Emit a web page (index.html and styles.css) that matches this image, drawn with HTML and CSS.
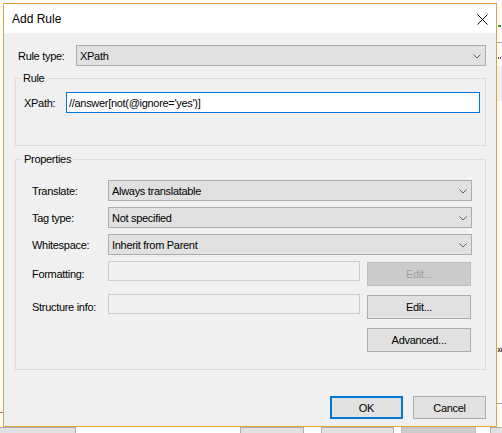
FILE: index.html
```html
<!DOCTYPE html>
<html>
<head>
<meta charset="utf-8">
<link rel="stylesheet" href="styles.css">
</head>
<body>
<div class="desktop">
  <div class="bg-line bg-line-top"></div>
  <div class="bg-gray"></div>
  <div class="bg-green"></div>
  <div class="bg-dots"></div>
  <div class="bg-line bg-line-low"></div>
  <div class="bg-chev">»</div>
  <div class="bg-left-line"></div>
  <div class="bg-btn bg-help">Help</div>
  <div class="bg-btn bg-back">Back</div>
  <div class="bg-btn bg-next">Next</div>
  <div class="bg-btn bg-finish">Finish</div>
  <div class="bg-btn bg-last"></div>
</div>

<div class="dialog">
  <div class="titlebar">
    <span class="title">Add Rule</span>
    <svg class="close" width="11" height="11" viewBox="0 0 11 11"><path d="M0.5 0.5 L10.5 10.5 M10.5 0.5 L0.5 10.5" stroke="#000" stroke-width="1"/></svg>
  </div>
  <div class="content">
    <div class="row ruletype">
      <span class="label lbl-ruletype">Rule type:</span>
      <div class="combo combo-wide"><span>XPath</span>
        <svg class="chev" width="8" height="5" viewBox="0 0 8 5"><polyline points="0.5,0.5 4,4 7.5,0.5" fill="none" stroke="#606060" stroke-width="1"/></svg>
      </div>
    </div>

    <div class="group group-rule">
      <span class="legend">Rule</span>
      <div class="row">
        <span class="label lbl-xpath">XPath:</span>
        <div class="textbox focused">//answer[not(@ignore='yes')]</div>
      </div>
    </div>

    <div class="group group-props">
      <span class="legend">Properties</span>
      <div class="row prop-row">
        <span class="label lbl-prop">Translate:</span>
        <div class="combo combo-prop"><span>Always translatable</span>
          <svg class="chev" width="8" height="5" viewBox="0 0 8 5"><polyline points="0.5,0.5 4,4 7.5,0.5" fill="none" stroke="#606060" stroke-width="1"/></svg>
        </div>
      </div>
      <div class="row prop-row">
        <span class="label lbl-prop">Tag type:</span>
        <div class="combo combo-prop"><span>Not specified</span>
          <svg class="chev" width="8" height="5" viewBox="0 0 8 5"><polyline points="0.5,0.5 4,4 7.5,0.5" fill="none" stroke="#606060" stroke-width="1"/></svg>
        </div>
      </div>
      <div class="row prop-row">
        <span class="label lbl-prop">Whitespace:</span>
        <div class="combo combo-prop"><span>Inherit from Parent</span>
          <svg class="chev" width="8" height="5" viewBox="0 0 8 5"><polyline points="0.5,0.5 4,4 7.5,0.5" fill="none" stroke="#606060" stroke-width="1"/></svg>
        </div>
      </div>
      <div class="row edit-row">
        <span class="label lbl-prop">Formatting:</span>
        <div class="textbox disabled-box"></div>
        <div class="btn btn-edit disabled">Edit...</div>
      </div>
      <div class="row edit-row">
        <span class="label lbl-prop">Structure info:</span>
        <div class="textbox disabled-box"></div>
        <div class="btn btn-edit">Edit...</div>
      </div>
      <div class="row adv-row">
        <div class="btn btn-edit">Advanced...</div>
      </div>
    </div>

    <div class="buttons">
      <div class="btn btn-dlg btn-ok">OK</div>
      <div class="btn btn-dlg">Cancel</div>
    </div>
  </div>
</div>
</body>
</html>
```

FILE: styles.css
```css
html, body {
  margin: 0;
  padding: 0;
  background: #ffffff;
  width: 502px;
  height: 433px;
  overflow: hidden;
  font-family: "Liberation Sans", Arial, sans-serif;
  font-size: 11px;
  letter-spacing: -0.3px;
  color: #000;
}

/* ---------- desktop behind the dialog ---------- */
.desktop {
  position: absolute;
  left: 0;
  top: 0;
  width: 502px;
  height: 433px;
  overflow: hidden;
}
.bg-line {
  position: absolute;
  left: 497px;
  width: 5px;
  height: 1px;
  background: #a0a0a0;
}
.bg-line-top { top: 42px; }
.bg-line-low { top: 403px; }
.bg-gray {
  position: absolute;
  left: 497px;
  top: 66px;
  width: 5px;
  height: 35px;
  background: #f0f0f0;
}
.bg-green {
  position: absolute;
  left: 498px;
  top: 25px;
  width: 3px;
  height: 2px;
  background: #2e9b2e;
}
.bg-dots {
  position: absolute;
  left: 498px;
  top: 57px;
  width: 4px;
  height: 2px;
  background: repeating-linear-gradient(90deg, #6b2a7a 0 1px, transparent 1px 2px);
}
.bg-chev {
  position: absolute;
  left: 497px;
  top: 343px;
  font-size: 11px;
  color: #404040;
  font-weight: bold;
}
.bg-left-line {
  position: absolute;
  left: 0;
  top: 412px;
  width: 3px;
  height: 1px;
  background: #808080;
}
.bg-btn {
  position: absolute;
  top: 427px;
  height: 24px;
  box-sizing: border-box;
  background: #e1e1e1;
  border: 1px solid #adadad;
  text-align: center;
  padding-top: 4px;
  font-size: 11px;
}
.bg-help { left: -1px; width: 77px; }
.bg-back { left: 240px; width: 64px; padding-left: 22px; }
.bg-next { left: 321px; width: 73px; }
.bg-finish { left: 401px; width: 75px; background: #cccccc; border-color: #bfbfbf; color: #a0a0a0; }
.bg-last { left: 490px; width: 20px; }

/* ---------- dialog ---------- */
.dialog {
  position: absolute;
  left: 3px;
  top: 3px;
  width: 494px;
  height: 424px;
  box-sizing: border-box;
  border: 1px solid #e7a13c;
  background: #f0f0f0;
  display: flex;
  flex-direction: column;
}
.titlebar {
  height: 29px;
  background: #ffffff;
  display: flex;
  align-items: center;
  justify-content: space-between;
  padding: 0 8px 0 8px;
  flex-shrink: 0;
}
.title {
  font-size: 12px;
  letter-spacing: 0;
  padding-top: 1px;
}
.close {
  display: block;
  margin-top: 1px;
}
.content {
  padding: 12px 10px 0 11px;
  display: flex;
  flex-direction: column;
}

.row {
  display: flex;
  align-items: center;
}
.label {
  flex-shrink: 0;
  white-space: nowrap;
}
.ruletype { padding-left: 3px; height: 21px; }
.lbl-ruletype { width: 58px; }
.lbl-xpath { width: 42px; }
.lbl-prop { width: 76px; }

.combo {
  box-sizing: border-box;
  height: 21px;
  background: #e1e1e1;
  border: 1px solid #adadad;
  display: flex;
  align-items: center;
  padding: 0 4px 0 3px;
  white-space: nowrap;
}
.combo .chev {
  margin-left: auto;
  display: block;
  margin-top: 1px;
}
.combo-wide { flex: 1; }
.combo-prop { width: 364px; }

.group {
  border: 1px solid #dcdcdc;
  display: flex;
  flex-direction: column;
  padding: 0;
}
.legend {
  align-self: flex-start;
  display: block;
  height: 13px;
  line-height: 13px;
  margin: -7px 0 0 5px;
  padding: 0 2px;
  background: #f0f0f0;
}
.group-rule {
  margin-top: 12px;
  padding-bottom: 32px;
}
.group-rule .legend { margin-bottom: 7px; }
.group-rule .row { padding: 0 5px 0 8px; }

.group-props {
  margin-top: 13px;
  padding-bottom: 17px;
}
.group-props .legend { margin-bottom: 14px; margin-left: 6px; }
.group-props .row { padding-left: 16px; }

.textbox {
  box-sizing: border-box;
  height: 21px;
  background: #ffffff;
  border: 1px solid #7a7a7a;
  padding: 0 2px;
  display: flex;
  align-items: center;
  white-space: nowrap;
}
.focused {
  flex: 1;
  border-color: #0078d7;
}

.prop-row { margin-bottom: 6px; }
.edit-row {
  height: 25px;
}
.disabled-box {
  align-self: flex-start;
  width: 252px;
  height: 20px;
  background: #f0f0f0;
  border-color: #cccccc;
}
.edit-row + .edit-row { margin-top: 8px; }
.group-props .adv-row {
  margin-top: 9px;
  padding-left: 351px;
}

.btn {
  box-sizing: border-box;
  background: #e1e1e1;
  border: 1px solid #adadad;
  display: flex;
  align-items: center;
  justify-content: center;
  white-space: nowrap;
}
.btn-edit {
  width: 104px;
  height: 24px;
  margin-left: 7px;
  align-self: flex-end;
}
.adv-row .btn-edit { margin-left: 0; }
.disabled {
  background: #cccccc;
  border-color: #bfbfbf;
  color: #a0a0a0;
}

.buttons {
  margin-top: 26px;
  display: flex;
  justify-content: flex-end;
  gap: 10px;
}
.btn-dlg {
  width: 73px;
  height: 23px;
}
.btn-ok {
  border: 2px solid #0078d7;
}
```
